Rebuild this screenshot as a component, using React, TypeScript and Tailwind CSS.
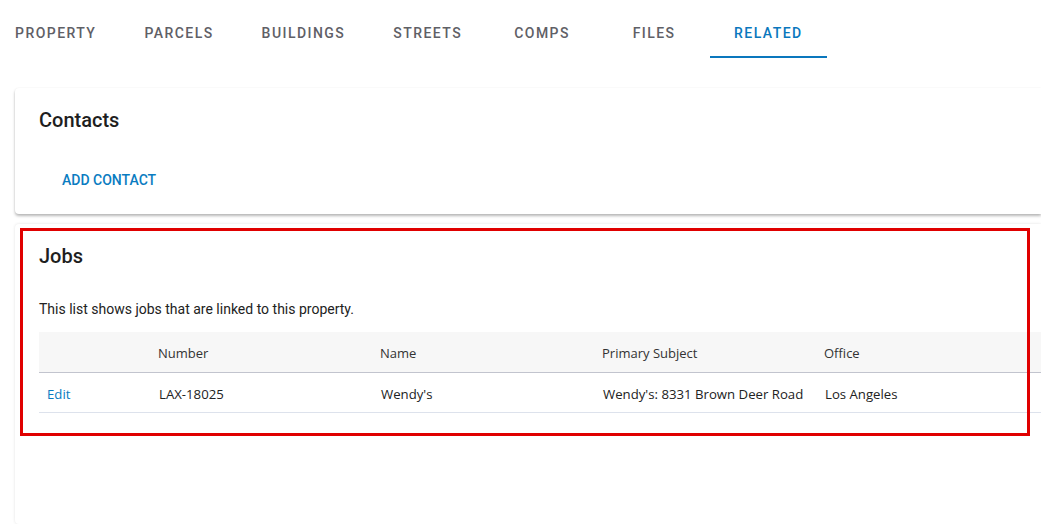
import React from 'react';

const tabs = ['Property', 'Parcels', 'Buildings', 'Streets', 'Comps', 'Files', 'Related'];

const jobs = [
  { number: 'LAX-18025', name: "Wendy's", subject: "Wendy's: 8331 Brown Deer Road", office: 'Los Angeles' },
];

const roboto = "font-['Roboto',_'Liberation_Sans',_sans-serif]";
const tableFont = "font-['Open_Sans',_'Noto_Sans',_sans-serif]";

export default function App() {
  const active = 'Related';

  return (
    <div className={`w-[1041px] h-[524px] overflow-hidden bg-white ${roboto}`}>
      {/* Tabs */}
      <div className="flex h-[58px] ml-[-9px]">
        {tabs.map(t => (
          <div
            key={t}
            className={`min-w-[112px] px-[24px] pt-[24px] flex justify-center text-sm leading-[18px] font-medium uppercase tracking-[1.45px] border-b-2 ${
              t === active ? 'text-[#0a77bd] border-[#0a77bd]' : 'text-[#5f6066] border-transparent'
            }`}
          >
            {t}
          </div>
        ))}
      </div>

      <div className="pl-[15px] pt-[30px] flex flex-col gap-[10px]">
        {/* Contacts card */}
        <div className="h-[126px] bg-white rounded-l shadow-[0_2px_3px_rgba(0,0,0,0.28),0_0_2px_rgba(0,0,0,0.06)] pl-6 pt-[20px]">
          <h2 className="text-[20px] font-medium text-[#1e1e1e] leading-6">Contacts</h2>
          <button className="mt-[38px] ml-[23px] text-sm font-medium text-[#0a7cc1] uppercase">Add contact</button>
        </div>

        {/* Jobs card */}
        <div className="relative h-[300px] bg-white rounded-l shadow-[0_0_3px_rgba(0,0,0,0.12)] pl-6 pt-[20px]">
          <h2 className="text-[20px] font-medium text-[#1e1e1e] leading-6">Jobs</h2>
          <p className="mt-[31px] text-sm text-[#222]">This list shows jobs that are linked to this property.</p>
          <table className={`mt-[13px] w-[1040px] border-collapse text-left ${tableFont}`}>
            <thead>
              <tr className="bg-[#f7f7f7] border-b border-[#c2c4ce] text-[13px] text-[#333]">
                <th className="w-[111px] h-[40px] px-2 pt-[4px] font-normal" />
                <th className="w-[222px] h-[40px] px-2 pt-[4px] font-normal">Number</th>
                <th className="w-[222px] h-[40px] px-2 pt-[4px] font-normal">Name</th>
                <th className="w-[222px] h-[40px] px-2 pt-[4px] font-normal">Primary Subject</th>
                <th className="h-[40px] px-2 pt-[4px] font-normal">Office</th>
              </tr>
            </thead>
            <tbody>
              {jobs.map(j => (
                <tr key={j.number} className="border-b border-[#dde2ec] text-[13.2px] text-[#222]">
                  <td className="h-[40px] px-2 pt-[5px] text-[#0a7cc1]">Edit</td>
                  <td className="h-[40px] px-[9px] pt-[5px]">{j.number}</td>
                  <td className="h-[40px] px-[9px] pt-[5px]">{j.name}</td>
                  <td className="h-[40px] px-[9px] pt-[5px]">{j.subject}</td>
                  <td className="h-[40px] px-[9px] pt-[5px]">{j.office}</td>
                </tr>
              ))}
            </tbody>
          </table>

          {/* highlight frame */}
          <div className="absolute left-[5px] top-[4px] w-[1010px] h-[208px] border-[3px] border-[#e00000] pointer-events-none" />
        </div>
      </div>
    </div>
  );
}
